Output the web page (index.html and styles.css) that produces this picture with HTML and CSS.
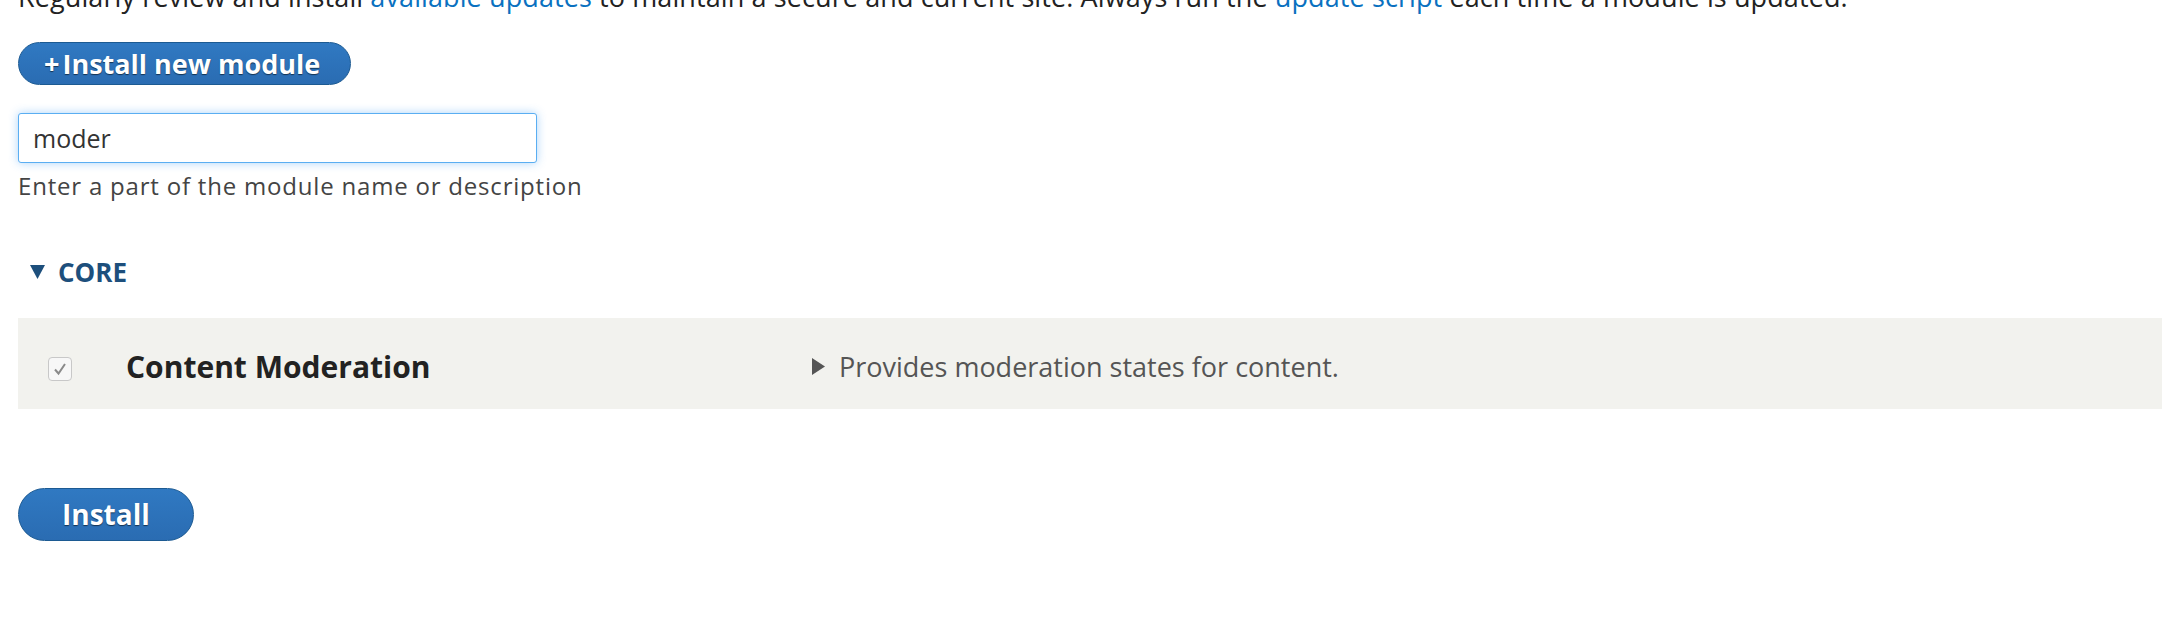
FILE: index.html
```html
<!DOCTYPE html>
<html lang="en">
<head>
    <meta charset="UTF-8">
    <title>Extend</title>
    <link rel="stylesheet" href="styles.css">
</head>
<body>
    <div class="page">
        <p class="intro">Regularly review and install <a href="#">available updates</a> to maintain a secure and current site. Always run the <a href="#">update script</a> each time a module is updated.</p>

        <a class="button button-action" href="#"><span class="plus">+</span>Install new module</a>

        <div class="filter">
            <input type="text" class="filter-input" value="moder">
            <div class="filter-help">Enter a part of the module name or description</div>
        </div>

        <details class="package" open>
            <summary>
                <svg class="caret" width="15" height="14" viewBox="0 0 15 14"><polygon points="0,0 15,0 7.5,14" fill="#1d4f7c"/></svg>
                CORE
            </summary>
            <div class="module-row">
                <div class="cell-check">
                    <span class="checkbox">
                        <svg width="16" height="14" viewBox="0 0 16 14"><path d="M3 7.5 L6.5 11.5 L13 2" fill="none" stroke="#8a8a8a" stroke-width="2"/></svg>
                    </span>
                </div>
                <div class="cell-name">Content Moderation</div>
                <div class="cell-desc">
                    <svg class="desc-caret" width="13" height="17" viewBox="0 0 13 17"><polygon points="0,0 13,8.5 0,17" fill="#555"/></svg>
                    Provides moderation states for content.
                </div>
            </div>
        </details>

        <button class="button button-primary" type="button">Install</button>
    </div>
</body>
</html>
```

FILE: styles.css
```css
/* Base */
body {
    margin: 0;
    background: #fff;
    font-family: 'Open Sans', 'DejaVu Sans', sans-serif;
    color: #222;
    overflow: hidden;
}

.page {
    padding-left: 18px;
}

a {
    color: #0a71c0;
    text-decoration: none;
}

.intro {
    margin: -22px 0 0;
    font-size: 27px;
    line-height: 38px;
    letter-spacing: 0.1px;
    white-space: nowrap;
}

/* Buttons */
.button {
    display: inline-block;
    border: 1px solid #1c5a92;
    border-radius: 30px;
    background: linear-gradient(#3079c2, #2a6cb2);
    color: #fff;
    font-family: inherit;
    font-weight: 700;
    text-shadow: 0 1px 1px rgba(0, 0, 0, 0.55);
    cursor: pointer;
}

.button-action {
    margin-top: 26px;
    padding: 6px 30px 6px 25px;
    font-size: 27px;
    line-height: 29px;
}

.button-action .plus {
    margin-right: 3px;
}

.button-primary {
    margin-top: 79px;
    padding: 10px 43px;
    font-size: 28px;
    line-height: 31px;
}

/* Filter */
.filter {
    margin-top: 28px;
}

.filter-input {
    box-sizing: border-box;
    width: 519px;
    height: 50px;
    margin: 0;
    padding: 9px 14px;
    border: 1px solid #5aaef2;
    border-radius: 3px;
    box-shadow: 0 0 10px rgba(70, 160, 245, 0.45);
    font-family: inherit;
    font-size: 25px;
    color: #333;
    outline: none;
}

.filter-help {
    margin-top: 7px;
    font-size: 24px;
    line-height: 32px;
    letter-spacing: 0.8px;
    color: #444;
}

/* Package */
.package {
    margin-top: 52px;
}

.package summary {
    display: flex;
    align-items: center;
    gap: 13px;
    padding-left: 12px;
    list-style: none;
    font-size: 26px;
    line-height: 36px;
    font-weight: 700;
    color: #1d4f7c;
    cursor: pointer;
}

.package summary::-webkit-details-marker {
    display: none;
}

.module-row {
    display: grid;
    grid-template-columns: 108px 686px 1fr;
    align-items: center;
    box-sizing: border-box;
    height: 91px;
    margin-top: 28px;
    padding-top: 5px;
    background: #f2f2ee;
}

.cell-check {
    padding-left: 30px;
    padding-top: 5px;
    display: flex;
}

.checkbox {
    display: flex;
    align-items: center;
    justify-content: center;
    box-sizing: border-box;
    width: 24px;
    height: 24px;
    border: 1px solid #c8c8c8;
    border-radius: 4px;
    background: #f7f7f7;
}

.cell-name {
    font-size: 30px;
    font-weight: 700;
    color: #222;
}

.cell-desc {
    display: flex;
    align-items: center;
    gap: 14px;
    font-size: 27px;
    color: #555;
}
```
